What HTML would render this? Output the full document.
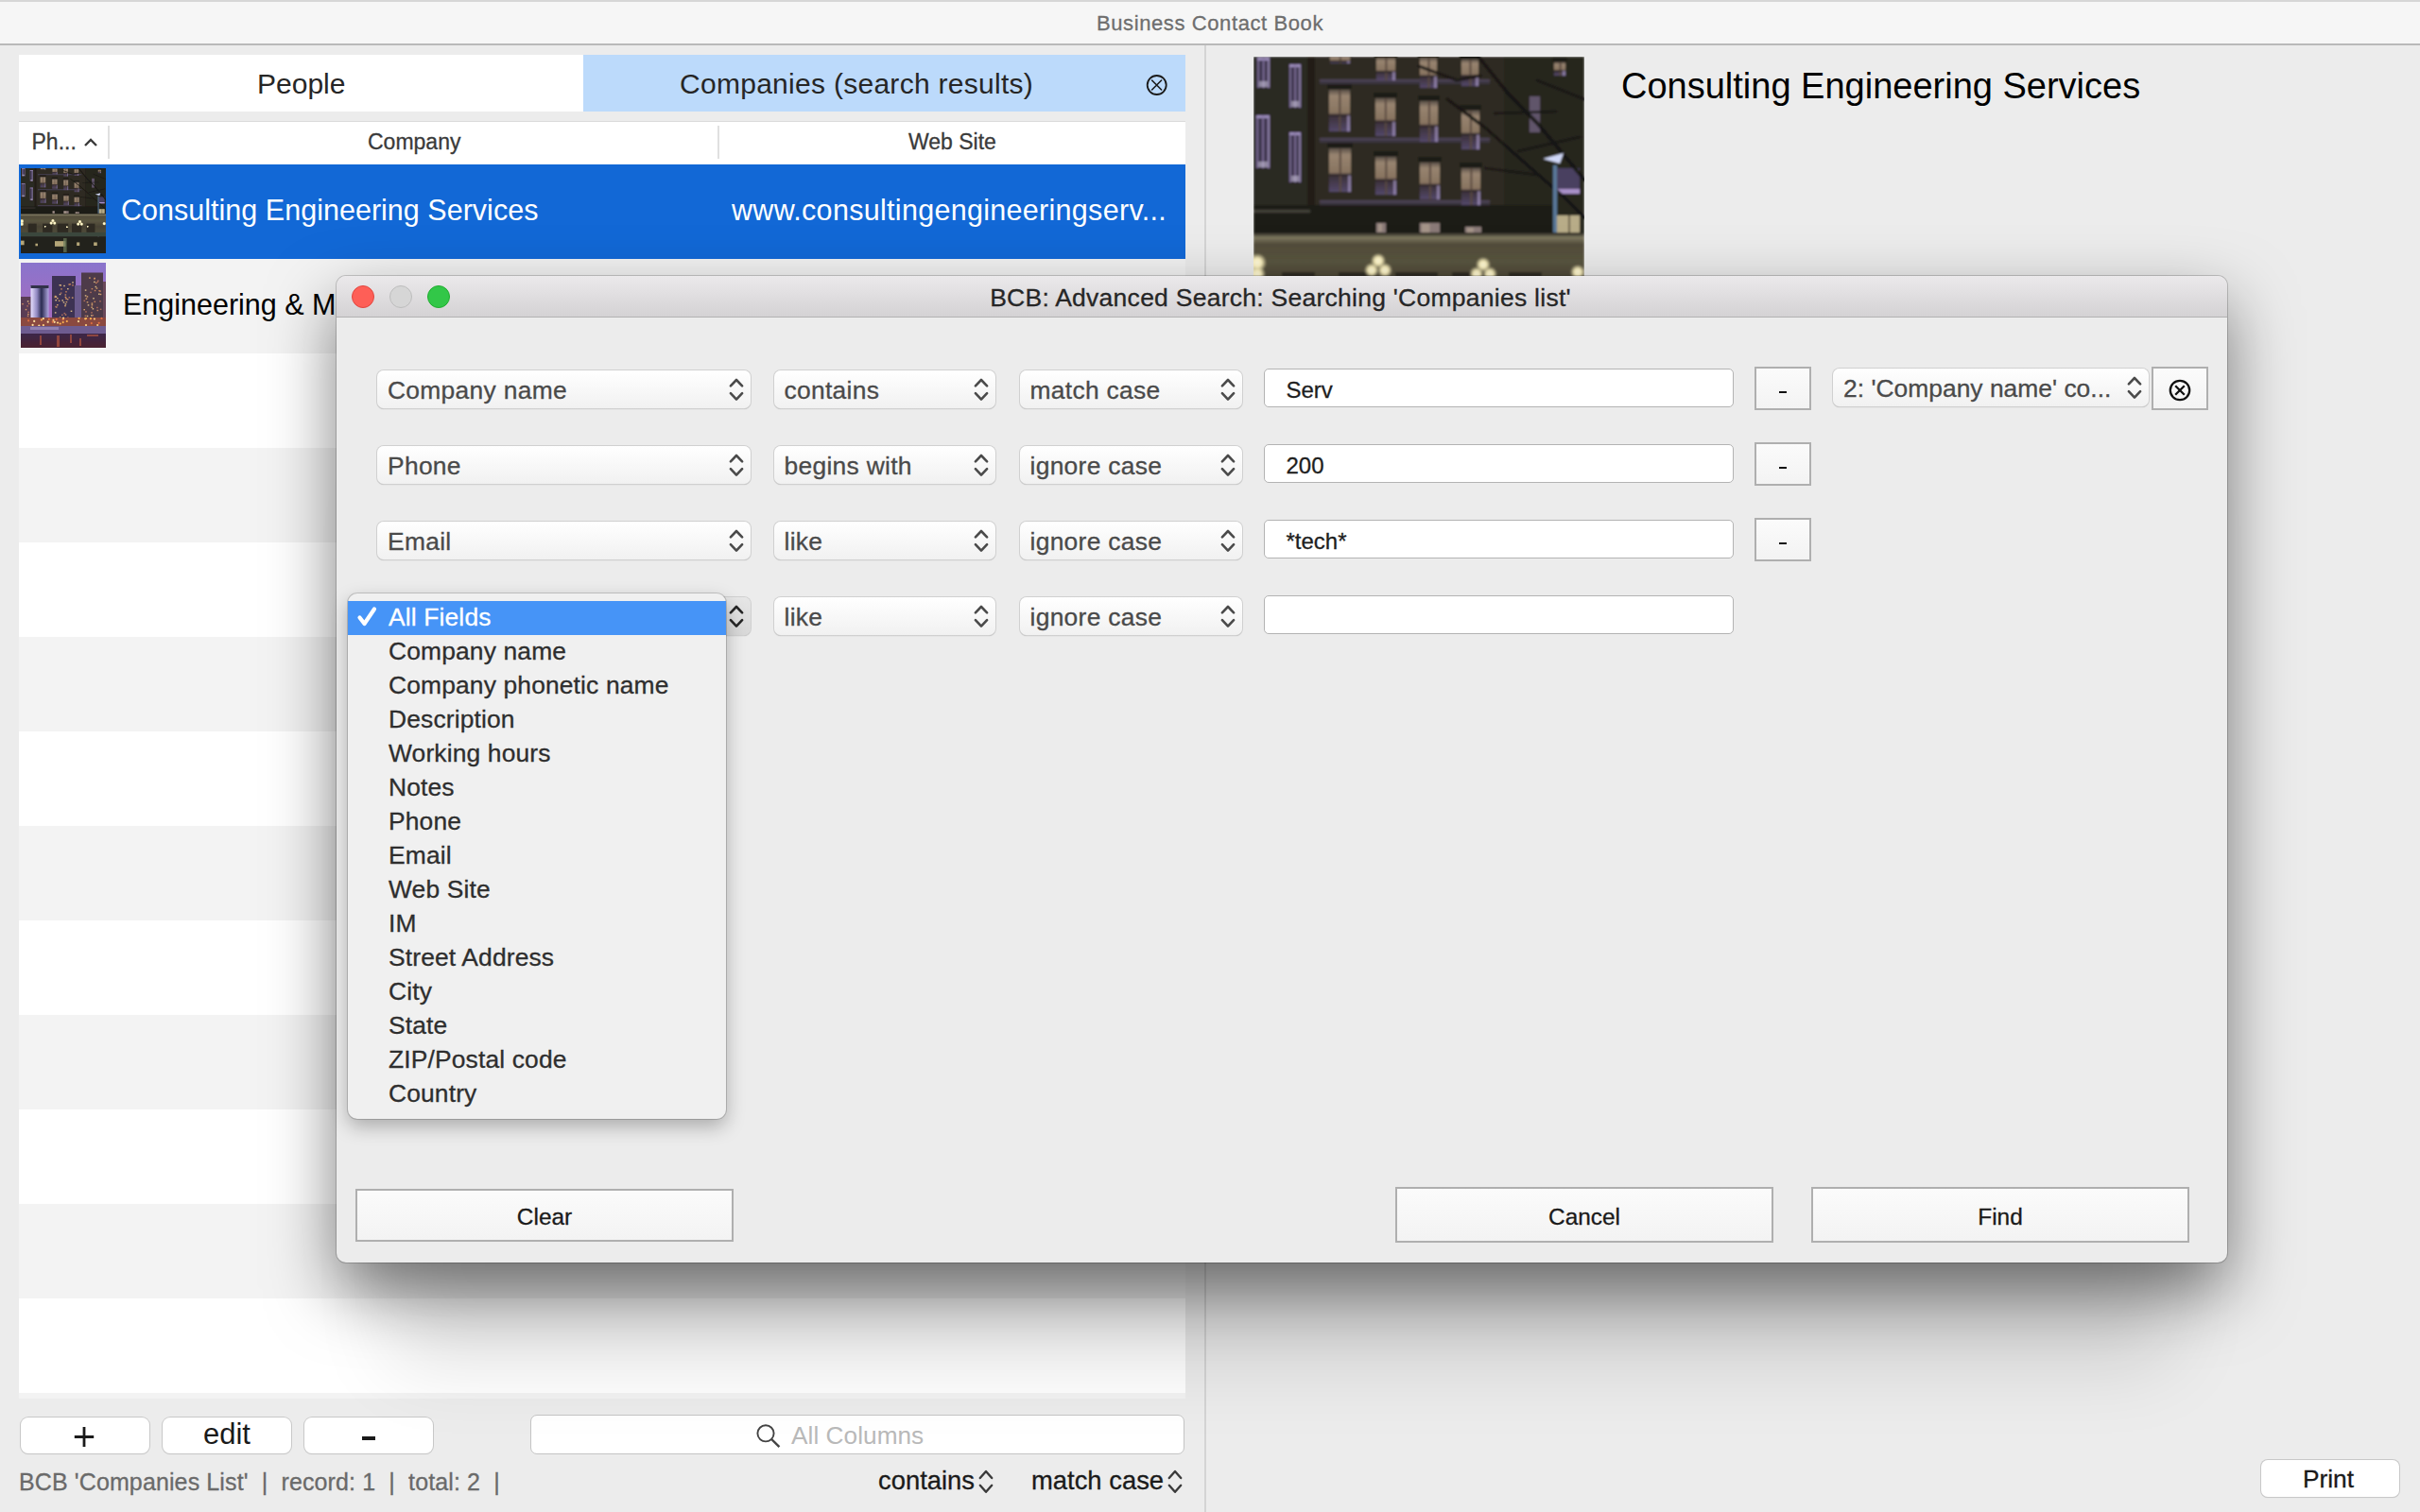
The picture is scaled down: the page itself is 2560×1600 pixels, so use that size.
<!DOCTYPE html>
<html><head><meta charset="utf-8">
<style>
html,body{margin:0;padding:0;}
body{width:2560px;height:1600px;position:relative;overflow:hidden;background:#ececec;font-family:"Liberation Sans",sans-serif;}
.a{position:absolute;box-sizing:border-box;}
.t{position:absolute;white-space:nowrap;line-height:1;-webkit-text-stroke:0.3px currentColor;}
svg{position:absolute;}
</style></head><body>
<div class="a" style="left:0px;top:0px;width:2560px;height:2px;background:#d6d6d6"></div>
<div class="a" style="left:0px;top:2px;width:2560px;height:44px;background:#f6f6f6"></div>
<div class="a" style="left:0px;top:46px;width:2560px;height:2px;background:#b9b9b9"></div>
<div class="t" style="left:1160px;top:14.3px;font-size:22px;color:#6e6e6e;letter-spacing:0.6px;">Business Contact Book</div>
<div class="a" style="left:1274px;top:48px;width:2px;height:1552px;background:#d4d4d4"></div>
<div class="a" style="left:20px;top:58px;width:597px;height:60px;background:#fff"></div>
<div class="a" style="left:617px;top:58px;width:637px;height:60px;background:#bcdafb"></div>
<div class="t" style="left:272px;top:73.5px;font-size:30px;color:#262626;-webkit-text-stroke:0;">People</div>
<div class="t" style="left:719px;top:73.5px;font-size:30px;color:#262626;letter-spacing:0.28px;-webkit-text-stroke:0;">Companies (search results)</div>
<svg style="left:1211px;top:77px" width="26" height="26" viewBox="0 0 26 26"><circle cx="12.7" cy="13" r="10" fill="none" stroke="#1a1a1a" stroke-width="1.8"/><path d="M7.6 8L17.6 18M17.6 8L7.6 18" stroke="#1a1a1a" stroke-width="1.6" stroke-linecap="round"/></svg>
<div class="a" style="left:20px;top:128px;width:1234px;height:1px;background:#dadada"></div>
<div class="a" style="left:20px;top:129px;width:1234px;height:45px;background:#fff"></div>
<div class="a" style="left:114px;top:133px;width:2px;height:35px;background:#e0e0e0"></div>
<div class="a" style="left:759px;top:133px;width:2px;height:35px;background:#e0e0e0"></div>
<div class="t" style="left:33.5px;top:139.4px;font-size:23px;color:#3a3a3a;">Ph...</div>
<svg style="left:88px;top:145px" width="16" height="12" viewBox="0 0 16 12"><path d="M2 9L8 3L14 9" fill="none" stroke="#3a3a3a" stroke-width="2.4"/></svg>
<div class="t" style="left:389px;top:139.4px;font-size:23px;color:#3a3a3a;">Company</div>
<div class="t" style="left:961px;top:139.4px;font-size:23px;color:#3a3a3a;">Web Site</div>
<div class="a" style="left:20px;top:174px;width:1234px;height:100px;background:#1268d6"></div>
<div class="a" style="left:20px;top:274px;width:1234px;height:100px;background:#f3f3f3"></div>
<div class="a" style="left:20px;top:374px;width:1234px;height:100px;background:#ffffff"></div>
<div class="a" style="left:20px;top:474px;width:1234px;height:100px;background:#f3f3f3"></div>
<div class="a" style="left:20px;top:574px;width:1234px;height:100px;background:#ffffff"></div>
<div class="a" style="left:20px;top:674px;width:1234px;height:100px;background:#f3f3f3"></div>
<div class="a" style="left:20px;top:774px;width:1234px;height:100px;background:#ffffff"></div>
<div class="a" style="left:20px;top:874px;width:1234px;height:100px;background:#f3f3f3"></div>
<div class="a" style="left:20px;top:974px;width:1234px;height:100px;background:#ffffff"></div>
<div class="a" style="left:20px;top:1074px;width:1234px;height:100px;background:#f3f3f3"></div>
<div class="a" style="left:20px;top:1174px;width:1234px;height:100px;background:#ffffff"></div>
<div class="a" style="left:20px;top:1274px;width:1234px;height:100px;background:#f3f3f3"></div>
<div class="a" style="left:20px;top:1374px;width:1234px;height:100px;background:#ffffff"></div>
<div class="a" style="left:20px;top:1474px;width:1234px;height:6px;background:#f3f3f3"></div>
<svg width="0" height="0" style="position:absolute;left:0;top:0"><defs><filter id="soft" x="0" y="0" width="100%" height="100%"><feGaussianBlur stdDeviation="1.3"/></filter><filter id="soft2" x="0" y="0" width="100%" height="100%"><feGaussianBlur stdDeviation="0.5"/></filter><linearGradient id="wwarm" x1="0" y1="0" x2="0" y2="1"><stop offset="0" stop-color="#5a5048"/><stop offset="0.15" stop-color="#988470"/><stop offset="0.55" stop-color="#887460"/><stop offset="0.62" stop-color="#3a3038"/><stop offset="1" stop-color="#54486a"/></linearGradient><linearGradient id="wlav" x1="0" y1="0" x2="1" y2="0"><stop offset="0" stop-color="#8a7aa8"/><stop offset="0.25" stop-color="#3a3248"/><stop offset="0.75" stop-color="#3a3248"/><stop offset="1" stop-color="#a898c8"/></linearGradient><linearGradient id="awn" x1="0" y1="0" x2="0" y2="1"><stop offset="0" stop-color="#24221c"/><stop offset="0.06" stop-color="#7e7860"/><stop offset="0.14" stop-color="#524d3a"/><stop offset="0.35" stop-color="#5a5540"/><stop offset="0.6" stop-color="#474234"/><stop offset="1" stop-color="#54503c"/></linearGradient><radialGradient id="glow"><stop offset="0" stop-color="#fffce0"/><stop offset="0.45" stop-color="#fff4c0"/><stop offset="1" stop-color="#fff4c0" stop-opacity="0"/></radialGradient><linearGradient id="csky" x1="0" y1="0" x2="0" y2="1"><stop offset="0" stop-color="#8a74cc"/><stop offset="0.6" stop-color="#a46cc0"/><stop offset="1" stop-color="#b86aa4"/></linearGradient><linearGradient id="cwat" x1="0" y1="0" x2="0" y2="1"><stop offset="0" stop-color="#3c2848"/><stop offset="1" stop-color="#4a2030"/></linearGradient><linearGradient id="glass" x1="0" y1="0" x2="1" y2="0"><stop offset="0" stop-color="#e8e0ff"/><stop offset="0.35" stop-color="#9088c0"/><stop offset="0.6" stop-color="#2a2a50"/><stop offset="1" stop-color="#b0a8e0"/></linearGradient></defs></svg>
<svg style="left:22px;top:178px;overflow:hidden" width="90" height="90" viewBox="0 0 350 350"><g filter="url(#soft)"><rect width="350" height="350" fill="#2c2a20"/><rect x="0" y="0" width="60" height="190" fill="#2c2920"/><rect x="57" y="0" width="8" height="175" fill="#201e18"/><rect x="65" y="0" width="200" height="160" fill="#2f2c22"/><rect x="265" y="0" width="85" height="190" fill="#27251e"/><rect x="70" y="24" width="180" height="5" fill="#3a3440"/><rect x="70" y="24" width="180" height="2" fill="#5a4e68" opacity="0.6"/><rect x="70" y="86" width="180" height="5" fill="#3a3440"/><rect x="70" y="86" width="180" height="2" fill="#5a4e68" opacity="0.6"/><rect x="70" y="152" width="180" height="5" fill="#3a3440"/><rect x="70" y="152" width="180" height="2" fill="#5a4e68" opacity="0.6"/><rect x="3" y="0" width="15" height="34" fill="#221e1c"/><rect x="4" y="1" width="13" height="32" fill="url(#wlav)"/><rect x="4" y="1" width="13" height="3" fill="#9a8ab8"/><rect x="9.850000000000001" y="1" width="1.5" height="32" fill="#8a7aa8"/><rect x="6" y="26" width="9" height="6" fill="#c8c0d8" opacity="0.6"/><rect x="37" y="7" width="14" height="48" fill="#221e1c"/><rect x="38" y="8" width="12" height="46" fill="url(#wlav)"/><rect x="38" y="8" width="12" height="3" fill="#9a8ab8"/><rect x="43.4" y="8" width="1.5" height="46" fill="#8a7aa8"/><rect x="40" y="47" width="8" height="6" fill="#c8c0d8" opacity="0.6"/><rect x="2" y="61" width="16" height="58" fill="#221e1c"/><rect x="3" y="62" width="14" height="56" fill="url(#wlav)"/><rect x="3" y="62" width="14" height="3" fill="#9a8ab8"/><rect x="9.3" y="62" width="1.5" height="56" fill="#8a7aa8"/><rect x="5" y="111" width="10" height="6" fill="#c8c0d8" opacity="0.6"/><rect x="37" y="79" width="14" height="55" fill="#221e1c"/><rect x="38" y="80" width="12" height="53" fill="url(#wlav)"/><rect x="38" y="80" width="12" height="3" fill="#9a8ab8"/><rect x="43.4" y="80" width="1.5" height="53" fill="#8a7aa8"/><rect x="40" y="126" width="8" height="6" fill="#c8c0d8" opacity="0.6"/><rect x="79" y="-6" width="25" height="5" fill="#1e1a18"/><rect x="81" y="0" width="21" height="7" fill="url(#wwarm)"/><rect x="90.87" y="0" width="2" height="7" fill="#5a4a40"/><rect x="81" y="4.2" width="21" height="1.5" fill="#2a2424"/><rect x="99" y="4.34" width="3" height="2.66" fill="#b0a0d0" opacity="0.6"/><rect x="128" y="-5" width="24" height="5" fill="#1e1a18"/><rect x="130" y="1" width="20" height="24" fill="url(#wwarm)"/><rect x="139.4" y="1" width="2" height="24" fill="#5a4a40"/><rect x="130" y="15.399999999999999" width="20" height="1.5" fill="#2a2424"/><rect x="147" y="15.879999999999999" width="3" height="9.120000000000001" fill="#b0a0d0" opacity="0.6"/><rect x="174" y="-5" width="22" height="5" fill="#1e1a18"/><rect x="176" y="1" width="18" height="32" fill="url(#wwarm)"/><rect x="184.46" y="1" width="2" height="32" fill="#5a4a40"/><rect x="176" y="20.2" width="18" height="1.5" fill="#2a2424"/><rect x="191" y="20.84" width="3" height="12.16" fill="#b0a0d0" opacity="0.6"/><rect x="218" y="-3" width="22" height="5" fill="#1e1a18"/><rect x="220" y="3" width="18" height="28" fill="url(#wwarm)"/><rect x="228.46" y="3" width="2" height="28" fill="#5a4a40"/><rect x="220" y="19.8" width="18" height="1.5" fill="#2a2424"/><rect x="235" y="20.36" width="3" height="10.64" fill="#b0a0d0" opacity="0.6"/><rect x="78" y="29" width="26" height="5" fill="#1e1a18"/><rect x="80" y="35" width="22" height="44" fill="url(#wwarm)"/><rect x="90.34" y="35" width="2" height="44" fill="#5a4a40"/><rect x="80" y="61.4" width="22" height="1.5" fill="#2a2424"/><rect x="99" y="62.28" width="3" height="16.72" fill="#b0a0d0" opacity="0.6"/><rect x="127" y="38" width="25" height="5" fill="#1e1a18"/><rect x="129" y="44" width="21" height="40" fill="url(#wwarm)"/><rect x="138.87" y="44" width="2" height="40" fill="#5a4a40"/><rect x="129" y="68.0" width="21" height="1.5" fill="#2a2424"/><rect x="147" y="68.8" width="3" height="15.2" fill="#b0a0d0" opacity="0.6"/><rect x="174" y="41" width="23" height="5" fill="#1e1a18"/><rect x="176" y="47" width="19" height="43" fill="url(#wwarm)"/><rect x="184.93" y="47" width="2" height="43" fill="#5a4a40"/><rect x="176" y="72.8" width="19" height="1.5" fill="#2a2424"/><rect x="192" y="73.66" width="3" height="16.34" fill="#b0a0d0" opacity="0.6"/><rect x="218" y="51" width="23" height="5" fill="#1e1a18"/><rect x="220" y="57" width="19" height="41" fill="url(#wwarm)"/><rect x="228.93" y="57" width="2" height="41" fill="#5a4a40"/><rect x="220" y="81.6" width="19" height="1.5" fill="#2a2424"/><rect x="236" y="82.42" width="3" height="15.58" fill="#b0a0d0" opacity="0.6"/><rect x="78" y="91" width="27" height="5" fill="#1e1a18"/><rect x="80" y="97" width="23" height="46" fill="url(#wwarm)"/><rect x="90.81" y="97" width="2" height="46" fill="#5a4a40"/><rect x="80" y="124.6" width="23" height="1.5" fill="#2a2424"/><rect x="100" y="125.52" width="3" height="17.48" fill="#b0a0d0" opacity="0.6"/><rect x="127" y="100" width="26" height="5" fill="#1e1a18"/><rect x="129" y="106" width="22" height="40" fill="url(#wwarm)"/><rect x="139.34" y="106" width="2" height="40" fill="#5a4a40"/><rect x="129" y="130.0" width="22" height="1.5" fill="#2a2424"/><rect x="148" y="130.8" width="3" height="15.2" fill="#b0a0d0" opacity="0.6"/><rect x="174" y="106" width="25" height="5" fill="#1e1a18"/><rect x="176" y="112" width="21" height="39" fill="url(#wwarm)"/><rect x="185.87" y="112" width="2" height="39" fill="#5a4a40"/><rect x="176" y="135.4" width="21" height="1.5" fill="#2a2424"/><rect x="194" y="136.18" width="3" height="14.82" fill="#b0a0d0" opacity="0.6"/><rect x="218" y="112" width="24" height="5" fill="#1e1a18"/><rect x="220" y="118" width="20" height="39" fill="url(#wwarm)"/><rect x="229.4" y="118" width="2" height="39" fill="#5a4a40"/><rect x="220" y="141.4" width="20" height="1.5" fill="#2a2424"/><rect x="237" y="142.18" width="3" height="14.82" fill="#b0a0d0" opacity="0.6"/><rect x="316" y="0" width="16" height="5" fill="#1e1a18"/><rect x="318" y="6" width="12" height="14" fill="url(#wwarm)"/><rect x="323.64" y="6" width="2" height="14" fill="#5a4a40"/><rect x="318" y="14.4" width="12" height="1.5" fill="#2a2424"/><rect x="327" y="14.68" width="3" height="5.32" fill="#b0a0d0" opacity="0.6"/><rect x="292" y="42" width="11" height="38" fill="#7a6a8a" opacity="0.7"/><rect x="321" y="118" width="24" height="27" fill="#4a4060"/><rect x="321" y="140" width="24" height="5" fill="#a890c8"/><rect x="0" y="157" width="320" height="32" fill="#1c1a16" opacity="0.8"/><rect x="0" y="162" width="60" height="3" fill="#5a5a50" opacity="0.6"/><rect x="130" y="176" width="10" height="10" fill="#8a7a78"/><rect x="132" y="177" width="4.0" height="8" fill="#b0a090" opacity="0.7"/><rect x="176" y="176" width="21" height="18" fill="#8a7a78"/><rect x="178" y="177" width="8.4" height="16" fill="#b0a090" opacity="0.7"/><rect x="224" y="180" width="17" height="15" fill="#8a7a78"/><rect x="226" y="181" width="6.800000000000001" height="13" fill="#b0a090" opacity="0.7"/><rect x="321" y="168" width="24" height="38" fill="#b8ac88"/><rect x="333" y="168" width="2" height="38" fill="#6a604a"/><g stroke="#181612" fill="none" stroke-linecap="round" opacity="0.9"><path d="M238 0 L270 40 L300 70 L350 130" stroke-width="4"/><path d="M205 45 L245 75 L290 115 L330 150 L350 170" stroke-width="3.5"/><path d="M255 60 L320 58 M280 100 L345 85 M245 118 L300 125 M300 25 L350 45" stroke-width="2.5"/><path d="M175 10 L215 25 L240 20" stroke-width="3"/></g><rect x="317" y="115" width="4" height="235" fill="#5a7898"/><path d="M306 108 L328 102 L324 113 Z" fill="#d0d8f8"/><rect x="0" y="186" width="350" height="90" fill="url(#awn)"/><rect x="30" y="228" width="35" height="36" fill="#2e2a22"/><rect x="90" y="228" width="40" height="36" fill="#2e2a22"/><rect x="150" y="228" width="45" height="36" fill="#2e2a22"/><rect x="210" y="228" width="40" height="36" fill="#2e2a22"/><rect x="270" y="228" width="35" height="36" fill="#2e2a22"/><g><circle cx="4" cy="218" r="10" fill="url(#glow)"/><circle cx="4" cy="230" r="9" fill="url(#glow)"/><circle cx="132" cy="216" r="8" fill="url(#glow)"/><circle cx="125" cy="226" r="8" fill="url(#glow)"/><circle cx="139" cy="226" r="8" fill="url(#glow)"/><circle cx="243" cy="220" r="8" fill="url(#glow)"/><circle cx="236" cy="230" r="8" fill="url(#glow)"/><circle cx="250" cy="230" r="8" fill="url(#glow)"/><circle cx="343" cy="228" r="8" fill="url(#glow)"/><circle cx="100" cy="240" r="5" fill="url(#glow)"/><circle cx="190" cy="242" r="5" fill="url(#glow)"/><circle cx="275" cy="240" r="5" fill="url(#glow)"/></g><rect x="0" y="264" width="350" height="18" fill="#3a463e"/><rect x="0" y="282" width="350" height="68" fill="#24221c"/><g fill="#d8c890" opacity="0.8"><rect x="0" y="298" width="14" height="18"/><rect x="140" y="300" width="44" height="22"/><rect x="230" y="305" width="12" height="14"/><rect x="300" y="305" width="14" height="14"/><rect x="60" y="310" width="10" height="10"/></g><rect x="175" y="288" width="14" height="58" fill="#6a7a5a" opacity="0.7"/></g></svg>
<svg style="left:22px;top:278px;overflow:hidden" width="90" height="90" viewBox="0 0 90 90"><g filter="url(#soft2)"><rect width="90" height="90" fill="url(#csky)"/><rect x="0" y="36" width="11" height="26" fill="#5a3c54"/><rect x="10.5" y="25" width="19" height="37" fill="url(#glass)"/><rect x="10.5" y="24" width="19" height="3" fill="#30304a"/><rect x="33" y="14" width="25" height="48" fill="#3e3252"/><rect x="57" y="24" width="8" height="38" fill="#6a5a8c"/><rect x="64" y="10.5" width="23" height="52" fill="#4e3a48"/><rect x="87" y="20" width="3" height="42" fill="#6a4a5a"/><g opacity="0.85"><rect x="41.5" y="23.2" width="1.6" height="1.4" fill="#e8b070"/><rect x="36.4" y="39.0" width="1.6" height="1.4" fill="#f0d090"/><rect x="46.7" y="54.3" width="1.6" height="1.4" fill="#d89060"/><rect x="35.7" y="34.8" width="1.6" height="1.4" fill="#e8b070"/><rect x="39.8" y="39.6" width="1.6" height="1.4" fill="#e8b070"/><rect x="51.5" y="22.1" width="1.6" height="1.4" fill="#d89060"/><rect x="47.6" y="40.9" width="1.6" height="1.4" fill="#e8b070"/><rect x="46.5" y="33.3" width="1.6" height="1.4" fill="#d89060"/><rect x="35.9" y="52.2" width="1.6" height="1.4" fill="#f0d090"/><rect x="43.4" y="39.2" width="1.6" height="1.4" fill="#f0d090"/><rect x="46.2" y="45.0" width="1.6" height="1.4" fill="#e8b070"/><rect x="46.6" y="43.2" width="1.6" height="1.4" fill="#f0d090"/><rect x="36.9" y="46.2" width="1.6" height="1.4" fill="#e8b070"/><rect x="47.4" y="37.4" width="1.6" height="1.4" fill="#c07860"/><rect x="50.5" y="36.1" width="1.6" height="1.4" fill="#c07860"/><rect x="42.2" y="27.2" width="1.6" height="1.4" fill="#d89060"/><rect x="49.0" y="27.0" width="1.6" height="1.4" fill="#f0d090"/><rect x="45.5" y="52.9" width="1.6" height="1.4" fill="#c07860"/><rect x="40.8" y="57.2" width="1.6" height="1.4" fill="#e8b070"/><rect x="45.2" y="23.8" width="1.6" height="1.4" fill="#f0d090"/><rect x="38.0" y="37.0" width="1.6" height="1.4" fill="#e8b070"/><rect x="54.2" y="20.2" width="1.6" height="1.4" fill="#f0d090"/><rect x="41.8" y="31.4" width="1.6" height="1.4" fill="#c07860"/><rect x="46.6" y="35.7" width="1.6" height="1.4" fill="#e8b070"/><rect x="53.9" y="36.4" width="1.6" height="1.4" fill="#e8b070"/><rect x="36.2" y="45.8" width="1.6" height="1.4" fill="#c07860"/><rect x="40.7" y="32.8" width="1.6" height="1.4" fill="#f0d090"/><rect x="35.5" y="35.9" width="1.6" height="1.4" fill="#d89060"/><rect x="47.2" y="37.2" width="1.6" height="1.4" fill="#d89060"/><rect x="50.4" y="22.3" width="1.6" height="1.4" fill="#d89060"/><rect x="43.0" y="54.6" width="1.6" height="1.4" fill="#c07860"/><rect x="36.6" y="35.4" width="1.6" height="1.4" fill="#f0d090"/><rect x="52.7" y="50.6" width="1.6" height="1.4" fill="#f0d090"/><rect x="49.1" y="57.4" width="1.6" height="1.4" fill="#c07860"/><rect x="54.2" y="23.2" width="1.6" height="1.4" fill="#d89060"/><rect x="38.0" y="44.0" width="1.6" height="1.4" fill="#e8b070"/><rect x="44.7" y="41.2" width="1.6" height="1.4" fill="#f0d090"/><rect x="40.6" y="23.0" width="1.6" height="1.4" fill="#f0d090"/><rect x="47.2" y="30.1" width="1.6" height="1.4" fill="#d89060"/><rect x="48.8" y="38.1" width="1.6" height="1.4" fill="#e8b070"/><rect x="74.2" y="52.2" width="1.6" height="1.4" fill="#c07860"/><rect x="73.2" y="30.7" width="1.6" height="1.4" fill="#c07860"/><rect x="77.4" y="15.8" width="1.6" height="1.4" fill="#e8b070"/><rect x="83.7" y="32.8" width="1.6" height="1.4" fill="#e8b070"/><rect x="72.1" y="15.4" width="1.6" height="1.4" fill="#e8b070"/><rect x="76.2" y="37.1" width="1.6" height="1.4" fill="#f0d090"/><rect x="77.0" y="16.2" width="1.6" height="1.4" fill="#d89060"/><rect x="77.1" y="19.7" width="1.6" height="1.4" fill="#f0d090"/><rect x="83.2" y="40.1" width="1.6" height="1.4" fill="#c07860"/><rect x="68.2" y="51.2" width="1.6" height="1.4" fill="#c07860"/><rect x="74.6" y="27.0" width="1.6" height="1.4" fill="#d89060"/><rect x="67.8" y="28.4" width="1.6" height="1.4" fill="#f0d090"/><rect x="74.6" y="44.1" width="1.6" height="1.4" fill="#e8b070"/><rect x="69.7" y="55.8" width="1.6" height="1.4" fill="#f0d090"/><rect x="68.6" y="37.4" width="1.6" height="1.4" fill="#e8b070"/><rect x="79.6" y="26.4" width="1.6" height="1.4" fill="#e8b070"/><rect x="78.5" y="24.8" width="1.6" height="1.4" fill="#f0d090"/><rect x="82.3" y="29.0" width="1.6" height="1.4" fill="#d89060"/><rect x="75.6" y="48.1" width="1.6" height="1.4" fill="#f0d090"/><rect x="77.5" y="40.6" width="1.6" height="1.4" fill="#d89060"/><rect x="80.5" y="49.8" width="1.6" height="1.4" fill="#d89060"/><rect x="69.6" y="35.2" width="1.6" height="1.4" fill="#e8b070"/><rect x="83.8" y="48.6" width="1.6" height="1.4" fill="#c07860"/><rect x="70.7" y="44.2" width="1.6" height="1.4" fill="#f0d090"/><rect x="74.1" y="55.2" width="1.6" height="1.4" fill="#f0d090"/><rect x="83.2" y="29.4" width="1.6" height="1.4" fill="#d89060"/><rect x="67.8" y="34.2" width="1.6" height="1.4" fill="#f0d090"/><rect x="69.7" y="41.1" width="1.6" height="1.4" fill="#e8b070"/><rect x="74.6" y="42.4" width="1.6" height="1.4" fill="#e8b070"/><rect x="81.0" y="18.4" width="1.6" height="1.4" fill="#c07860"/><rect x="80.1" y="46.8" width="1.6" height="1.4" fill="#c07860"/><rect x="82.0" y="32.5" width="1.6" height="1.4" fill="#f0d090"/><rect x="67.6" y="55.6" width="1.6" height="1.4" fill="#c07860"/><rect x="74.3" y="46.5" width="1.6" height="1.4" fill="#e8b070"/><rect x="79.0" y="20.7" width="1.6" height="1.4" fill="#d89060"/><rect x="66.5" y="39.6" width="1.6" height="1.4" fill="#c07860"/><rect x="80.5" y="19.6" width="1.6" height="1.4" fill="#c07860"/><rect x="77.8" y="28.8" width="1.6" height="1.4" fill="#d89060"/><rect x="66.4" y="49.0" width="1.6" height="1.4" fill="#e8b070"/><rect x="75.5" y="55.0" width="1.6" height="1.4" fill="#c07860"/><rect x="7.9" y="42.7" width="1.6" height="1.4" fill="#d89060"/><rect x="1.2" y="43.0" width="1.6" height="1.4" fill="#d89060"/><rect x="6.3" y="45.2" width="1.6" height="1.4" fill="#c07860"/><rect x="6.8" y="40.2" width="1.6" height="1.4" fill="#f0d090"/><rect x="7.3" y="51.6" width="1.6" height="1.4" fill="#c07860"/><rect x="6.8" y="55.7" width="1.6" height="1.4" fill="#d89060"/><rect x="4.7" y="48.9" width="1.6" height="1.4" fill="#e8b070"/><rect x="7.1" y="53.8" width="1.6" height="1.4" fill="#e8b070"/></g><rect x="0" y="58" width="90" height="10" fill="#8a4a40"/><circle cx="68.3" cy="59.3" r="1.1" fill="#ffd080"/><circle cx="41.7" cy="64.5" r="1.1" fill="#ffb050"/><circle cx="28.7" cy="62.7" r="1.1" fill="#ffe0a0"/><circle cx="69.0" cy="59.0" r="1.1" fill="#ffb050"/><circle cx="21.9" cy="60.5" r="1.1" fill="#ffb050"/><circle cx="44.7" cy="63.1" r="1.1" fill="#ffb050"/><circle cx="39.0" cy="63.5" r="1.1" fill="#ffd080"/><circle cx="61.0" cy="62.1" r="1.1" fill="#ffe0a0"/><circle cx="44.7" cy="60.2" r="1.1" fill="#e07040"/><circle cx="81.2" cy="66.0" r="1.1" fill="#ffd080"/><circle cx="73.9" cy="59.2" r="1.1" fill="#ffb050"/><circle cx="34.5" cy="60.8" r="1.1" fill="#ffd080"/><circle cx="37.7" cy="59.9" r="1.1" fill="#e07040"/><circle cx="69.0" cy="66.1" r="1.1" fill="#ffd080"/><circle cx="82.7" cy="63.8" r="1.1" fill="#e07040"/><circle cx="12.6" cy="65.9" r="1.1" fill="#ffe0a0"/><circle cx="19.3" cy="66.6" r="1.1" fill="#ffe0a0"/><circle cx="77.9" cy="59.5" r="1.1" fill="#ffd080"/><circle cx="14.2" cy="61.9" r="1.1" fill="#ffe0a0"/><circle cx="29.8" cy="59.8" r="1.1" fill="#e07040"/><circle cx="8.1" cy="61.3" r="1.1" fill="#e07040"/><circle cx="48.8" cy="62.0" r="1.1" fill="#ffb050"/><circle cx="33.8" cy="62.7" r="1.1" fill="#e07040"/><circle cx="45.1" cy="58.6" r="1.1" fill="#ffd080"/><circle cx="85.5" cy="58.9" r="1.1" fill="#e07040"/><circle cx="23.9" cy="66.2" r="1.1" fill="#ffd080"/><circle cx="23.8" cy="59.2" r="1.1" fill="#ffe0a0"/><circle cx="74.8" cy="64.1" r="1.1" fill="#e07040"/><circle cx="35.7" cy="62.8" r="1.1" fill="#ffe0a0"/><circle cx="61.6" cy="58.8" r="1.1" fill="#ffb050"/><rect x="0" y="67" width="90" height="8" fill="#6e5c90"/><rect x="10" y="68" width="30" height="3" fill="#9080b0"/><rect x="0" y="75" width="90" height="15" fill="url(#cwat)"/><g fill="#d06040" opacity="0.55"><rect x="20" y="77" width="2" height="10"/><rect x="38" y="77" width="3" height="12"/><rect x="52" y="76" width="2" height="9"/><rect x="70" y="76" width="12" height="2"/><rect x="62" y="80" width="2" height="8"/></g></g></svg>
<div class="t" style="left:128px;top:207.1px;font-size:30.5px;color:#fff;letter-spacing:0.02px;-webkit-text-stroke:0;">Consulting Engineering Services</div>
<div class="t" style="left:774px;top:207.1px;font-size:30.5px;color:#fff;letter-spacing:0.3px;-webkit-text-stroke:0;">www.consultingengineeringserv...</div>
<div class="t" style="left:130px;top:307.1px;font-size:30.5px;color:#000;-webkit-text-stroke:0;">Engineering &amp; Manufacturing</div>
<svg style="left:1326px;top:60px;overflow:hidden" width="350" height="350" viewBox="0 0 350 350"><g filter="url(#soft)"><rect width="350" height="350" fill="#2c2a20"/><rect x="0" y="0" width="60" height="190" fill="#2c2920"/><rect x="57" y="0" width="8" height="175" fill="#201e18"/><rect x="65" y="0" width="200" height="160" fill="#2f2c22"/><rect x="265" y="0" width="85" height="190" fill="#27251e"/><rect x="70" y="24" width="180" height="5" fill="#3a3440"/><rect x="70" y="24" width="180" height="2" fill="#5a4e68" opacity="0.6"/><rect x="70" y="86" width="180" height="5" fill="#3a3440"/><rect x="70" y="86" width="180" height="2" fill="#5a4e68" opacity="0.6"/><rect x="70" y="152" width="180" height="5" fill="#3a3440"/><rect x="70" y="152" width="180" height="2" fill="#5a4e68" opacity="0.6"/><rect x="3" y="0" width="15" height="34" fill="#221e1c"/><rect x="4" y="1" width="13" height="32" fill="url(#wlav)"/><rect x="4" y="1" width="13" height="3" fill="#9a8ab8"/><rect x="9.850000000000001" y="1" width="1.5" height="32" fill="#8a7aa8"/><rect x="6" y="26" width="9" height="6" fill="#c8c0d8" opacity="0.6"/><rect x="37" y="7" width="14" height="48" fill="#221e1c"/><rect x="38" y="8" width="12" height="46" fill="url(#wlav)"/><rect x="38" y="8" width="12" height="3" fill="#9a8ab8"/><rect x="43.4" y="8" width="1.5" height="46" fill="#8a7aa8"/><rect x="40" y="47" width="8" height="6" fill="#c8c0d8" opacity="0.6"/><rect x="2" y="61" width="16" height="58" fill="#221e1c"/><rect x="3" y="62" width="14" height="56" fill="url(#wlav)"/><rect x="3" y="62" width="14" height="3" fill="#9a8ab8"/><rect x="9.3" y="62" width="1.5" height="56" fill="#8a7aa8"/><rect x="5" y="111" width="10" height="6" fill="#c8c0d8" opacity="0.6"/><rect x="37" y="79" width="14" height="55" fill="#221e1c"/><rect x="38" y="80" width="12" height="53" fill="url(#wlav)"/><rect x="38" y="80" width="12" height="3" fill="#9a8ab8"/><rect x="43.4" y="80" width="1.5" height="53" fill="#8a7aa8"/><rect x="40" y="126" width="8" height="6" fill="#c8c0d8" opacity="0.6"/><rect x="79" y="-6" width="25" height="5" fill="#1e1a18"/><rect x="81" y="0" width="21" height="7" fill="url(#wwarm)"/><rect x="90.87" y="0" width="2" height="7" fill="#5a4a40"/><rect x="81" y="4.2" width="21" height="1.5" fill="#2a2424"/><rect x="99" y="4.34" width="3" height="2.66" fill="#b0a0d0" opacity="0.6"/><rect x="128" y="-5" width="24" height="5" fill="#1e1a18"/><rect x="130" y="1" width="20" height="24" fill="url(#wwarm)"/><rect x="139.4" y="1" width="2" height="24" fill="#5a4a40"/><rect x="130" y="15.399999999999999" width="20" height="1.5" fill="#2a2424"/><rect x="147" y="15.879999999999999" width="3" height="9.120000000000001" fill="#b0a0d0" opacity="0.6"/><rect x="174" y="-5" width="22" height="5" fill="#1e1a18"/><rect x="176" y="1" width="18" height="32" fill="url(#wwarm)"/><rect x="184.46" y="1" width="2" height="32" fill="#5a4a40"/><rect x="176" y="20.2" width="18" height="1.5" fill="#2a2424"/><rect x="191" y="20.84" width="3" height="12.16" fill="#b0a0d0" opacity="0.6"/><rect x="218" y="-3" width="22" height="5" fill="#1e1a18"/><rect x="220" y="3" width="18" height="28" fill="url(#wwarm)"/><rect x="228.46" y="3" width="2" height="28" fill="#5a4a40"/><rect x="220" y="19.8" width="18" height="1.5" fill="#2a2424"/><rect x="235" y="20.36" width="3" height="10.64" fill="#b0a0d0" opacity="0.6"/><rect x="78" y="29" width="26" height="5" fill="#1e1a18"/><rect x="80" y="35" width="22" height="44" fill="url(#wwarm)"/><rect x="90.34" y="35" width="2" height="44" fill="#5a4a40"/><rect x="80" y="61.4" width="22" height="1.5" fill="#2a2424"/><rect x="99" y="62.28" width="3" height="16.72" fill="#b0a0d0" opacity="0.6"/><rect x="127" y="38" width="25" height="5" fill="#1e1a18"/><rect x="129" y="44" width="21" height="40" fill="url(#wwarm)"/><rect x="138.87" y="44" width="2" height="40" fill="#5a4a40"/><rect x="129" y="68.0" width="21" height="1.5" fill="#2a2424"/><rect x="147" y="68.8" width="3" height="15.2" fill="#b0a0d0" opacity="0.6"/><rect x="174" y="41" width="23" height="5" fill="#1e1a18"/><rect x="176" y="47" width="19" height="43" fill="url(#wwarm)"/><rect x="184.93" y="47" width="2" height="43" fill="#5a4a40"/><rect x="176" y="72.8" width="19" height="1.5" fill="#2a2424"/><rect x="192" y="73.66" width="3" height="16.34" fill="#b0a0d0" opacity="0.6"/><rect x="218" y="51" width="23" height="5" fill="#1e1a18"/><rect x="220" y="57" width="19" height="41" fill="url(#wwarm)"/><rect x="228.93" y="57" width="2" height="41" fill="#5a4a40"/><rect x="220" y="81.6" width="19" height="1.5" fill="#2a2424"/><rect x="236" y="82.42" width="3" height="15.58" fill="#b0a0d0" opacity="0.6"/><rect x="78" y="91" width="27" height="5" fill="#1e1a18"/><rect x="80" y="97" width="23" height="46" fill="url(#wwarm)"/><rect x="90.81" y="97" width="2" height="46" fill="#5a4a40"/><rect x="80" y="124.6" width="23" height="1.5" fill="#2a2424"/><rect x="100" y="125.52" width="3" height="17.48" fill="#b0a0d0" opacity="0.6"/><rect x="127" y="100" width="26" height="5" fill="#1e1a18"/><rect x="129" y="106" width="22" height="40" fill="url(#wwarm)"/><rect x="139.34" y="106" width="2" height="40" fill="#5a4a40"/><rect x="129" y="130.0" width="22" height="1.5" fill="#2a2424"/><rect x="148" y="130.8" width="3" height="15.2" fill="#b0a0d0" opacity="0.6"/><rect x="174" y="106" width="25" height="5" fill="#1e1a18"/><rect x="176" y="112" width="21" height="39" fill="url(#wwarm)"/><rect x="185.87" y="112" width="2" height="39" fill="#5a4a40"/><rect x="176" y="135.4" width="21" height="1.5" fill="#2a2424"/><rect x="194" y="136.18" width="3" height="14.82" fill="#b0a0d0" opacity="0.6"/><rect x="218" y="112" width="24" height="5" fill="#1e1a18"/><rect x="220" y="118" width="20" height="39" fill="url(#wwarm)"/><rect x="229.4" y="118" width="2" height="39" fill="#5a4a40"/><rect x="220" y="141.4" width="20" height="1.5" fill="#2a2424"/><rect x="237" y="142.18" width="3" height="14.82" fill="#b0a0d0" opacity="0.6"/><rect x="316" y="0" width="16" height="5" fill="#1e1a18"/><rect x="318" y="6" width="12" height="14" fill="url(#wwarm)"/><rect x="323.64" y="6" width="2" height="14" fill="#5a4a40"/><rect x="318" y="14.4" width="12" height="1.5" fill="#2a2424"/><rect x="327" y="14.68" width="3" height="5.32" fill="#b0a0d0" opacity="0.6"/><rect x="292" y="42" width="11" height="38" fill="#7a6a8a" opacity="0.7"/><rect x="321" y="118" width="24" height="27" fill="#4a4060"/><rect x="321" y="140" width="24" height="5" fill="#a890c8"/><rect x="0" y="157" width="320" height="32" fill="#1c1a16" opacity="0.8"/><rect x="0" y="162" width="60" height="3" fill="#5a5a50" opacity="0.6"/><rect x="130" y="176" width="10" height="10" fill="#8a7a78"/><rect x="132" y="177" width="4.0" height="8" fill="#b0a090" opacity="0.7"/><rect x="176" y="176" width="21" height="18" fill="#8a7a78"/><rect x="178" y="177" width="8.4" height="16" fill="#b0a090" opacity="0.7"/><rect x="224" y="180" width="17" height="15" fill="#8a7a78"/><rect x="226" y="181" width="6.800000000000001" height="13" fill="#b0a090" opacity="0.7"/><rect x="321" y="168" width="24" height="38" fill="#b8ac88"/><rect x="333" y="168" width="2" height="38" fill="#6a604a"/><g stroke="#181612" fill="none" stroke-linecap="round" opacity="0.9"><path d="M238 0 L270 40 L300 70 L350 130" stroke-width="4"/><path d="M205 45 L245 75 L290 115 L330 150 L350 170" stroke-width="3.5"/><path d="M255 60 L320 58 M280 100 L345 85 M245 118 L300 125 M300 25 L350 45" stroke-width="2.5"/><path d="M175 10 L215 25 L240 20" stroke-width="3"/></g><rect x="317" y="115" width="4" height="235" fill="#5a7898"/><path d="M306 108 L328 102 L324 113 Z" fill="#d0d8f8"/><rect x="0" y="186" width="350" height="90" fill="url(#awn)"/><rect x="30" y="228" width="35" height="36" fill="#2e2a22"/><rect x="90" y="228" width="40" height="36" fill="#2e2a22"/><rect x="150" y="228" width="45" height="36" fill="#2e2a22"/><rect x="210" y="228" width="40" height="36" fill="#2e2a22"/><rect x="270" y="228" width="35" height="36" fill="#2e2a22"/><g><circle cx="4" cy="218" r="10" fill="url(#glow)"/><circle cx="4" cy="230" r="9" fill="url(#glow)"/><circle cx="132" cy="216" r="8" fill="url(#glow)"/><circle cx="125" cy="226" r="8" fill="url(#glow)"/><circle cx="139" cy="226" r="8" fill="url(#glow)"/><circle cx="243" cy="220" r="8" fill="url(#glow)"/><circle cx="236" cy="230" r="8" fill="url(#glow)"/><circle cx="250" cy="230" r="8" fill="url(#glow)"/><circle cx="343" cy="228" r="8" fill="url(#glow)"/><circle cx="100" cy="240" r="5" fill="url(#glow)"/><circle cx="190" cy="242" r="5" fill="url(#glow)"/><circle cx="275" cy="240" r="5" fill="url(#glow)"/></g><rect x="0" y="264" width="350" height="18" fill="#3a463e"/><rect x="0" y="282" width="350" height="68" fill="#24221c"/><g fill="#d8c890" opacity="0.8"><rect x="0" y="298" width="14" height="18"/><rect x="140" y="300" width="44" height="22"/><rect x="230" y="305" width="12" height="14"/><rect x="300" y="305" width="14" height="14"/><rect x="60" y="310" width="10" height="10"/></g><rect x="175" y="288" width="14" height="58" fill="#6a7a5a" opacity="0.7"/></g></svg>
<div class="t" style="left:1715px;top:72.2px;font-size:38px;color:#000;-webkit-text-stroke:0;">Consulting Engineering Services</div>
<div class="a" style="left:22px;top:1500px;width:136px;height:38px;background:#fff;border-radius:8px;box-shadow:0 0 0 1px #c8c8c8,0 1px 1px 0 rgba(0,0,0,0.15)"></div>
<div class="a" style="left:172px;top:1500px;width:136px;height:38px;background:#fff;border-radius:8px;box-shadow:0 0 0 1px #c8c8c8,0 1px 1px 0 rgba(0,0,0,0.15)"></div>
<div class="a" style="left:322px;top:1500px;width:136px;height:38px;background:#fff;border-radius:8px;box-shadow:0 0 0 1px #c8c8c8,0 1px 1px 0 rgba(0,0,0,0.15)"></div>
<svg style="left:78px;top:1509px" width="22" height="23" viewBox="0 0 22 23"><path d="M11 1V22M0.8 11.5H21.2" stroke="#1a1a1a" stroke-width="2.8"/></svg>
<div class="t" style="left:180.0px;width:120px;text-align:center;top:1501.7px;font-size:31px;color:#1a1a1a;-webkit-text-stroke:0;">edit</div>
<div class="a" style="left:383px;top:1520px;width:14px;height:4px;background:#1a1a1a"></div>
<div class="a" style="left:561px;top:1497px;width:692px;height:42px;background:#fff;border:1px solid #c4c4c4;border-radius:7px"></div>
<svg style="left:798px;top:1504px" width="30" height="30" viewBox="0 0 30 30"><circle cx="12" cy="12.8" r="8.6" fill="none" stroke="#444" stroke-width="1.9"/><path d="M18.2 19L26.4 27.2" stroke="#444" stroke-width="2.4"/></svg>
<div class="t" style="left:837px;top:1505.7px;font-size:26.2px;color:#b9b9b9;letter-spacing:0.05px;-webkit-text-stroke:0;">All Columns</div>
<div class="t" style="left:20px;top:1555.8px;font-size:25px;color:#6a6a6a;letter-spacing:0.12px;">BCB 'Companies List'&nbsp;&nbsp;|&nbsp;&nbsp;record: 1&nbsp;&nbsp;|&nbsp;&nbsp;total: 2&nbsp;&nbsp;|</div>
<div class="t" style="left:929px;top:1553.2px;font-size:27.4px;color:#1a1a1a;">contains</div>
<div class="t" style="left:1091px;top:1553.2px;font-size:27.4px;color:#1a1a1a;">match case</div>
<svg style="left:1035px;top:1552px" width="16" height="30" viewBox="0 0 16 30"><path d="M1.8 12L8 5L14.2 12M1.8 19.8L8 26.8L14.2 19.8" fill="none" stroke="#3a3a3a" stroke-width="2.4" stroke-linecap="round" stroke-linejoin="round"/></svg>
<svg style="left:1235px;top:1552px" width="16" height="30" viewBox="0 0 16 30"><path d="M1.8 12L8 5L14.2 12M1.8 19.8L8 26.8L14.2 19.8" fill="none" stroke="#3a3a3a" stroke-width="2.4" stroke-linecap="round" stroke-linejoin="round"/></svg>
<div class="a" style="left:2392px;top:1545px;width:146px;height:39px;background:#fff;border-radius:7px;box-shadow:0 0 0 1px #c8c8c8,0 1px 1px 0 rgba(0,0,0,0.15)"></div>
<div class="t" style="left:2393.0px;width:140px;text-align:center;top:1551.6px;font-size:26.3px;color:#1a1a1a;">Print</div>
<div class="a" style="left:356px;top:292px;width:2000px;height:1044px;border-radius:10px;background:#ececec;box-shadow:0 30px 70px 0 rgba(0,0,0,0.5), 0 165px 80px -60px rgba(0,0,0,0.12), 0 0 0 1px rgba(0,0,0,0.18)"></div>
<div class="a" style="left:356px;top:292px;width:2000px;height:43px;border-radius:10px 10px 0 0;background:linear-gradient(#ebe9eb,#d4d2d4)"></div>
<div class="a" style="left:356px;top:335px;width:2000px;height:1px;background:#b2b2b2"></div>
<div class="t" style="left:854.5px;width:1000px;text-align:center;top:301.5px;font-size:26.5px;color:#262626;letter-spacing:0.26px;">BCB: Advanced Search: Searching 'Companies list'</div>
<svg style="left:370px;top:300px" width="110" height="28" viewBox="0 0 110 28"><circle cx="14" cy="14" r="11.5" fill="#fe5f57" stroke="#e2463f" stroke-width="1"/><circle cx="54" cy="14" r="11.5" fill="#d6d6d6" stroke="#bdbdbd" stroke-width="1"/><circle cx="94" cy="14" r="11.5" fill="#32c748" stroke="#20ad2f" stroke-width="1"/></svg>
<div class="a" style="left:399px;top:392px;width:394.5px;height:40px;border-radius:7px;background:linear-gradient(#ffffff,#f1f1f1);box-shadow:0 0 0 1px #d0d0d0, 0 1px 1px 0 rgba(0,0,0,0.3)"></div>
<div class="t" style="left:410px;top:399.6px;font-size:26.4px;color:#4a4a4a;letter-spacing:0.3px;">Company name</div>
<svg style="left:769.5px;top:398.0px" width="18" height="28" viewBox="0 0 18 28"><path d="M2.9 10.3L9 4L15.1 10.3M2.9 18.2L9 24.6L15.1 18.2" fill="none" stroke="#4a4a4a" stroke-width="2.6" stroke-linecap="round" stroke-linejoin="round"/></svg>
<div class="a" style="left:818.5px;top:392px;width:234.5px;height:40px;border-radius:7px;background:linear-gradient(#ffffff,#f1f1f1);box-shadow:0 0 0 1px #d0d0d0, 0 1px 1px 0 rgba(0,0,0,0.3)"></div>
<div class="t" style="left:829.5px;top:399.6px;font-size:26.4px;color:#4a4a4a;letter-spacing:0.3px;">contains</div>
<svg style="left:1029px;top:398.0px" width="18" height="28" viewBox="0 0 18 28"><path d="M2.9 10.3L9 4L15.1 10.3M2.9 18.2L9 24.6L15.1 18.2" fill="none" stroke="#4a4a4a" stroke-width="2.6" stroke-linecap="round" stroke-linejoin="round"/></svg>
<div class="a" style="left:1078.5px;top:392px;width:235.0px;height:40px;border-radius:7px;background:linear-gradient(#ffffff,#f1f1f1);box-shadow:0 0 0 1px #d0d0d0, 0 1px 1px 0 rgba(0,0,0,0.3)"></div>
<div class="t" style="left:1089.5px;top:399.6px;font-size:26.4px;color:#4a4a4a;letter-spacing:0.3px;">match case</div>
<svg style="left:1289.5px;top:398.0px" width="18" height="28" viewBox="0 0 18 28"><path d="M2.9 10.3L9 4L15.1 10.3M2.9 18.2L9 24.6L15.1 18.2" fill="none" stroke="#4a4a4a" stroke-width="2.6" stroke-linecap="round" stroke-linejoin="round"/></svg>
<div class="a" style="left:1337px;top:390px;width:497px;height:41px;border-radius:5px;background:#fff;border:1px solid #b3b3b3"></div>
<div class="t" style="left:1360.5px;top:401.1px;font-size:24px;color:#1e1e1e;">Serv</div>
<div class="a" style="left:1856px;top:388px;width:60px;height:46px;background:linear-gradient(#fbfbfb,#f3f3f3);border:2px solid #afafaf"></div>
<div class="a" style="left:1881.5px;top:413.7px;width:8.5px;height:2.5px;background:#111"></div>
<div class="a" style="left:399px;top:472px;width:394.5px;height:40px;border-radius:7px;background:linear-gradient(#ffffff,#f1f1f1);box-shadow:0 0 0 1px #d0d0d0, 0 1px 1px 0 rgba(0,0,0,0.3)"></div>
<div class="t" style="left:410px;top:479.6px;font-size:26.4px;color:#4a4a4a;letter-spacing:0.3px;">Phone</div>
<svg style="left:769.5px;top:478.0px" width="18" height="28" viewBox="0 0 18 28"><path d="M2.9 10.3L9 4L15.1 10.3M2.9 18.2L9 24.6L15.1 18.2" fill="none" stroke="#4a4a4a" stroke-width="2.6" stroke-linecap="round" stroke-linejoin="round"/></svg>
<div class="a" style="left:818.5px;top:472px;width:234.5px;height:40px;border-radius:7px;background:linear-gradient(#ffffff,#f1f1f1);box-shadow:0 0 0 1px #d0d0d0, 0 1px 1px 0 rgba(0,0,0,0.3)"></div>
<div class="t" style="left:829.5px;top:479.6px;font-size:26.4px;color:#4a4a4a;letter-spacing:0.3px;">begins with</div>
<svg style="left:1029px;top:478.0px" width="18" height="28" viewBox="0 0 18 28"><path d="M2.9 10.3L9 4L15.1 10.3M2.9 18.2L9 24.6L15.1 18.2" fill="none" stroke="#4a4a4a" stroke-width="2.6" stroke-linecap="round" stroke-linejoin="round"/></svg>
<div class="a" style="left:1078.5px;top:472px;width:235.0px;height:40px;border-radius:7px;background:linear-gradient(#ffffff,#f1f1f1);box-shadow:0 0 0 1px #d0d0d0, 0 1px 1px 0 rgba(0,0,0,0.3)"></div>
<div class="t" style="left:1089.5px;top:479.6px;font-size:26.4px;color:#4a4a4a;letter-spacing:0.3px;">ignore case</div>
<svg style="left:1289.5px;top:478.0px" width="18" height="28" viewBox="0 0 18 28"><path d="M2.9 10.3L9 4L15.1 10.3M2.9 18.2L9 24.6L15.1 18.2" fill="none" stroke="#4a4a4a" stroke-width="2.6" stroke-linecap="round" stroke-linejoin="round"/></svg>
<div class="a" style="left:1337px;top:470px;width:497px;height:41px;border-radius:5px;background:#fff;border:1px solid #b3b3b3"></div>
<div class="t" style="left:1360.5px;top:481.1px;font-size:24px;color:#1e1e1e;">200</div>
<div class="a" style="left:1856px;top:468px;width:60px;height:46px;background:linear-gradient(#fbfbfb,#f3f3f3);border:2px solid #afafaf"></div>
<div class="a" style="left:1881.5px;top:493.7px;width:8.5px;height:2.5px;background:#111"></div>
<div class="a" style="left:399px;top:552px;width:394.5px;height:40px;border-radius:7px;background:linear-gradient(#ffffff,#f1f1f1);box-shadow:0 0 0 1px #d0d0d0, 0 1px 1px 0 rgba(0,0,0,0.3)"></div>
<div class="t" style="left:410px;top:559.6px;font-size:26.4px;color:#4a4a4a;letter-spacing:0.3px;">Email</div>
<svg style="left:769.5px;top:558.0px" width="18" height="28" viewBox="0 0 18 28"><path d="M2.9 10.3L9 4L15.1 10.3M2.9 18.2L9 24.6L15.1 18.2" fill="none" stroke="#4a4a4a" stroke-width="2.6" stroke-linecap="round" stroke-linejoin="round"/></svg>
<div class="a" style="left:818.5px;top:552px;width:234.5px;height:40px;border-radius:7px;background:linear-gradient(#ffffff,#f1f1f1);box-shadow:0 0 0 1px #d0d0d0, 0 1px 1px 0 rgba(0,0,0,0.3)"></div>
<div class="t" style="left:829.5px;top:559.6px;font-size:26.4px;color:#4a4a4a;letter-spacing:0.3px;">like</div>
<svg style="left:1029px;top:558.0px" width="18" height="28" viewBox="0 0 18 28"><path d="M2.9 10.3L9 4L15.1 10.3M2.9 18.2L9 24.6L15.1 18.2" fill="none" stroke="#4a4a4a" stroke-width="2.6" stroke-linecap="round" stroke-linejoin="round"/></svg>
<div class="a" style="left:1078.5px;top:552px;width:235.0px;height:40px;border-radius:7px;background:linear-gradient(#ffffff,#f1f1f1);box-shadow:0 0 0 1px #d0d0d0, 0 1px 1px 0 rgba(0,0,0,0.3)"></div>
<div class="t" style="left:1089.5px;top:559.6px;font-size:26.4px;color:#4a4a4a;letter-spacing:0.3px;">ignore case</div>
<svg style="left:1289.5px;top:558.0px" width="18" height="28" viewBox="0 0 18 28"><path d="M2.9 10.3L9 4L15.1 10.3M2.9 18.2L9 24.6L15.1 18.2" fill="none" stroke="#4a4a4a" stroke-width="2.6" stroke-linecap="round" stroke-linejoin="round"/></svg>
<div class="a" style="left:1337px;top:550px;width:497px;height:41px;border-radius:5px;background:#fff;border:1px solid #b3b3b3"></div>
<div class="t" style="left:1360.5px;top:561.1px;font-size:24px;color:#1e1e1e;">*tech*</div>
<div class="a" style="left:1856px;top:548px;width:60px;height:46px;background:linear-gradient(#fbfbfb,#f3f3f3);border:2px solid #afafaf"></div>
<div class="a" style="left:1881.5px;top:573.7px;width:8.5px;height:2.5px;background:#111"></div>
<div class="a" style="left:399px;top:632px;width:394.5px;height:40px;border-radius:7px;background:linear-gradient(#e6e6e6,#d8d8d8);box-shadow:0 0 0 1px #d0d0d0, 0 1px 1px 0 rgba(0,0,0,0.3)"></div>
<svg style="left:769.5px;top:638.0px" width="18" height="28" viewBox="0 0 18 28"><path d="M2.9 10.3L9 4L15.1 10.3M2.9 18.2L9 24.6L15.1 18.2" fill="none" stroke="#262626" stroke-width="2.6" stroke-linecap="round" stroke-linejoin="round"/></svg>
<div class="a" style="left:818.5px;top:632px;width:234.5px;height:40px;border-radius:7px;background:linear-gradient(#ffffff,#f1f1f1);box-shadow:0 0 0 1px #d0d0d0, 0 1px 1px 0 rgba(0,0,0,0.3)"></div>
<div class="t" style="left:829.5px;top:639.6px;font-size:26.4px;color:#4a4a4a;letter-spacing:0.3px;">like</div>
<svg style="left:1029px;top:638.0px" width="18" height="28" viewBox="0 0 18 28"><path d="M2.9 10.3L9 4L15.1 10.3M2.9 18.2L9 24.6L15.1 18.2" fill="none" stroke="#4a4a4a" stroke-width="2.6" stroke-linecap="round" stroke-linejoin="round"/></svg>
<div class="a" style="left:1078.5px;top:632px;width:235.0px;height:40px;border-radius:7px;background:linear-gradient(#ffffff,#f1f1f1);box-shadow:0 0 0 1px #d0d0d0, 0 1px 1px 0 rgba(0,0,0,0.3)"></div>
<div class="t" style="left:1089.5px;top:639.6px;font-size:26.4px;color:#4a4a4a;letter-spacing:0.3px;">ignore case</div>
<svg style="left:1289.5px;top:638.0px" width="18" height="28" viewBox="0 0 18 28"><path d="M2.9 10.3L9 4L15.1 10.3M2.9 18.2L9 24.6L15.1 18.2" fill="none" stroke="#4a4a4a" stroke-width="2.6" stroke-linecap="round" stroke-linejoin="round"/></svg>
<div class="a" style="left:1337px;top:630px;width:497px;height:41px;border-radius:5px;background:#fff;border:1px solid #b3b3b3"></div>
<div class="a" style="left:1939px;top:390px;width:334px;height:40px;border-radius:7px;background:linear-gradient(#ffffff,#f1f1f1);box-shadow:0 0 0 1px #d0d0d0, 0 1px 1px 0 rgba(0,0,0,0.3)"></div>
<div class="t" style="left:1950px;top:397.6px;font-size:26.4px;color:#4a4a4a;letter-spacing:0.02px;">2: 'Company name' co...</div>
<svg style="left:2249px;top:396.0px" width="18" height="28" viewBox="0 0 18 28"><path d="M2.9 10.3L9 4L15.1 10.3M2.9 18.2L9 24.6L15.1 18.2" fill="none" stroke="#4a4a4a" stroke-width="2.6" stroke-linecap="round" stroke-linejoin="round"/></svg>
<div class="a" style="left:2276px;top:388px;width:60px;height:46px;background:linear-gradient(#fbfbfb,#f3f3f3);border:2px solid #afafaf"></div>
<svg style="left:2292px;top:399px" width="28" height="28" viewBox="0 0 28 28"><circle cx="14" cy="14" r="10.2" fill="none" stroke="#111" stroke-width="2.3"/><path d="M9.2 9.2L18.8 18.8M18.8 9.2L9.2 18.8" stroke="#111" stroke-width="2.3"/></svg>
<div class="a" style="left:376px;top:1258px;width:400px;height:56px;background:linear-gradient(#fbfbfb,#f3f3f3);border:2px solid #afafaf"></div>
<div class="t" style="left:426.0px;width:300px;text-align:center;top:1275.8px;font-size:24.4px;color:#1a1a1a;">Clear</div>
<div class="a" style="left:1476px;top:1256px;width:400px;height:59px;background:linear-gradient(#fbfbfb,#f3f3f3);border:2px solid #afafaf"></div>
<div class="t" style="left:1526.0px;width:300px;text-align:center;top:1276.3px;font-size:24.4px;color:#1a1a1a;">Cancel</div>
<div class="a" style="left:1916px;top:1256px;width:400px;height:59px;background:linear-gradient(#fbfbfb,#f3f3f3);border:2px solid #afafaf"></div>
<div class="t" style="left:1966.0px;width:300px;text-align:center;top:1276.3px;font-size:24.4px;color:#1a1a1a;">Find</div>
<div class="a" style="left:368px;top:628px;width:400px;height:556px;border-radius:10px;background:#f0f0f0;box-shadow:0 0 0 1px rgba(0,0,0,0.16), 0 8px 20px rgba(0,0,0,0.28)"></div>
<div class="a" style="left:368px;top:636px;width:400px;height:36px;background:#4694f7"></div>
<svg style="left:376px;top:640px" width="26" height="26" viewBox="0 0 26 26"><path d="M4.5 13.5L9.5 20L20 4.5" fill="none" stroke="#fff" stroke-width="4.2" stroke-linecap="round" stroke-linejoin="round"/></svg>
<div class="t" style="left:411px;top:639.6px;font-size:26.4px;color:#fff;letter-spacing:0.15px;">All Fields</div>
<div class="t" style="left:411px;top:675.6px;font-size:26.4px;color:#2e2e2e;letter-spacing:0.15px;">Company name</div>
<div class="t" style="left:411px;top:711.6px;font-size:26.4px;color:#2e2e2e;letter-spacing:0.15px;">Company phonetic name</div>
<div class="t" style="left:411px;top:747.6px;font-size:26.4px;color:#2e2e2e;letter-spacing:0.15px;">Description</div>
<div class="t" style="left:411px;top:783.6px;font-size:26.4px;color:#2e2e2e;letter-spacing:0.15px;">Working hours</div>
<div class="t" style="left:411px;top:819.6px;font-size:26.4px;color:#2e2e2e;letter-spacing:0.15px;">Notes</div>
<div class="t" style="left:411px;top:855.6px;font-size:26.4px;color:#2e2e2e;letter-spacing:0.15px;">Phone</div>
<div class="t" style="left:411px;top:891.6px;font-size:26.4px;color:#2e2e2e;letter-spacing:0.15px;">Email</div>
<div class="t" style="left:411px;top:927.6px;font-size:26.4px;color:#2e2e2e;letter-spacing:0.15px;">Web Site</div>
<div class="t" style="left:411px;top:963.6px;font-size:26.4px;color:#2e2e2e;letter-spacing:0.15px;">IM</div>
<div class="t" style="left:411px;top:999.6px;font-size:26.4px;color:#2e2e2e;letter-spacing:0.15px;">Street Address</div>
<div class="t" style="left:411px;top:1035.6px;font-size:26.4px;color:#2e2e2e;letter-spacing:0.15px;">City</div>
<div class="t" style="left:411px;top:1071.6px;font-size:26.4px;color:#2e2e2e;letter-spacing:0.15px;">State</div>
<div class="t" style="left:411px;top:1107.6px;font-size:26.4px;color:#2e2e2e;letter-spacing:0.15px;">ZIP/Postal code</div>
<div class="t" style="left:411px;top:1143.6px;font-size:26.4px;color:#2e2e2e;letter-spacing:0.15px;">Country</div>
</body></html>
